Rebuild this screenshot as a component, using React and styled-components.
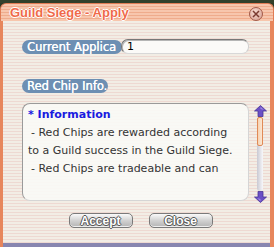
import React from "react";
import styled, { createGlobalStyle } from "styled-components";

const Global = createGlobalStyle`
  html, body { margin: 0; padding: 0; background: #2e3a26; overflow: hidden; }
  #root { width: 274px; height: 247px; }
`;

const stripes = `repeating-linear-gradient(to bottom, #f2ede5 0px, #f2ede5 2px, #eed9d2 2px, #eed9d2 3px)`;

const Window = styled.div`
  width: 274px;
  height: 247px;
  display: flex;
  flex-direction: column;
  font-family: "DejaVu Sans", Verdana, sans-serif;
`;

const TopGap = styled.div`
  height: 3px;
  background: #33402b;
`;

const TitleBar = styled.div`
  height: 17px;
  display: flex;
  align-items: center;
  justify-content: space-between;
  padding: 0 10px 0 9px;
  border-radius: 6px 6px 0 0;
  border: 1px solid #e07c55;
  border-bottom: none;
  background: repeating-linear-gradient(to bottom, #f7c6ad 0px, #f7c6ad 2px, #efab8c 2px, #efab8c 3px);
`;

const Title = styled.span`
  font-family: "Liberation Sans", Arial, sans-serif;
  font-weight: bold;
  font-size: 13px;
  color: #f06a4a;
  text-shadow: 1px 0 0 #fff, -1px 0 0 #fff, 0 1px 0 #fff, 0 -1px 0 #fff;
`;

const CloseX = styled.div`
  width: 12px;
  height: 12px;
  margin-top: 3px;
  border-radius: 50%;
  background: radial-gradient(circle at 40% 35%, #f8dcd2, #d39a8c);
  border: 1px solid #a25a4a;
  display: flex;
  align-items: center;
  justify-content: center;
`;

const Body = styled.div`
  flex: 1;
  display: flex;
  flex-direction: column;
  background: ${stripes};
  border-left: 3px solid #e7865c;
  border-right: 4px solid #e7865c;
  padding: 18px 21px 0 19px;
`;

const Row = styled.div`
  display: flex;
  align-items: center;
  margin-top: ${(p) => p.$mt || 0}px;
`;

const Pill = styled.div`
  height: 14px;
  width: ${(p) => p.$w}px;
  background: #6d8fb3;
  border-radius: 7px;
  color: #fff;
  font-size: 11.5px;
  line-height: 14px;
  padding-left: 5px;
  white-space: nowrap;
  overflow: hidden;
  box-sizing: border-box;
  flex-shrink: 0;
  text-shadow: 0.3px 0 0 #fff;
`;

const Input = styled.div`
  margin-left: -1px;
  flex: 1;
  height: 15px;
  box-sizing: border-box;
  background: #fbfaf8;
  border: 1px solid #777;
  border-right-color: #cfcfcf;
  border-bottom-color: #d8d8d8;
  border-radius: 7px;
  box-shadow: inset 1px 1px 0 #b5b5b5;
  font-size: 11px;
  line-height: 13px;
  padding-left: 5px;
  color: #000;
`;

const InfoRow = styled.div`
  display: flex;
  margin-top: 10px;
  margin-right: -18px;
`;

const TextBox = styled.div`
  width: 228px;
  height: 98px;
  box-sizing: border-box;
  background: rgba(250, 249, 246, 0.9);
  border: 1px solid #9a9a9a;
  border-right-color: #d5d5d5;
  border-bottom-color: #d5d5d5;
  border-radius: 8px;
  padding: 2px 4px 0 5px;
  overflow: hidden;
  font-size: 11px;
  line-height: 18px;
  color: #333;
`;

const Head = styled.div`
  color: #1a1ae0;
  font-weight: bold;
`;

const Line = styled.div`
  white-space: nowrap;
  padding-left: ${(p) => (p.$indent ? 3 : 0)}px;
`;

const Scroll = styled.div`
  width: 14px;
  margin-left: 4px;
  margin-top: 2px;
  display: flex;
  flex-direction: column;
  align-items: center;
`;

const Track = styled.div`
  width: 6px;
  height: 74px;
  background: linear-gradient(to right, #c9c9d2, #f7f7fa);
  border-radius: 3px;
  display: flex;
  flex-direction: column;
`;

const Thumb = styled.div`
  width: 6px;
  height: 29px;
  box-sizing: border-box;
  background: linear-gradient(to right, #f8d2b0, #fbe6d3);
  border: 1px solid #e08a55;
  border-radius: 2px;
`;

const Buttons = styled.div`
  display: flex;
  justify-content: center;
  gap: 16px;
  margin-top: 10px;
  padding-left: 10px;
`;

const Btn = styled.div`
  width: 64px;
  height: 15px;
  box-sizing: border-box;
  border-radius: 5px;
  border: 1px solid #7a7a7a;
  background: linear-gradient(to bottom, #fafafa, #d2d2d2 50%, #b4b4b4);
  box-shadow: inset 0 -1px 0 #eee;
  display: flex;
  align-items: center;
  justify-content: center;
  font-family: "Liberation Sans", Arial, sans-serif;
  font-weight: bold;
  font-size: 12px;
  color: #fff;
  text-shadow: 1px 0 0 #555, -1px 0 0 #555, 0 1px 0 #555, 0 -1px 0 #555;
`;

const BottomBar = styled.div`
  height: 4px;
  background: #8886b0;
  border-left: 3px solid #e7865c;
  border-right: 4px solid #e7865c;
`;

const Arrow = ({ down }) => (
  <svg width="13" height="12" viewBox="0 0 13 12" style={{ display: "block" }}>
    <g transform={down ? "rotate(180 6.5 6)" : undefined}>
      <path d="M6.5 0.5 L12.5 6 L9 6 L9 11.5 L4 11.5 L4 6 L0.5 6 Z" fill="#6b4fc6" stroke="#4a3596" strokeWidth="0.8" />
      <path d="M6.5 1.8 L10 5 L6.5 4 Z" fill="#9f8be6" />
    </g>
  </svg>
);

export default function App() {
  return (
    <>
      <Global />
      <Window>
        <TopGap />
        <TitleBar>
          <Title>Guild Siege - Apply</Title>
          <CloseX>
            <svg width="8" height="8" viewBox="0 0 8 8">
              <path d="M1 1 L7 7 M7 1 L1 7" stroke="#7a3a30" strokeWidth="1.5" />
            </svg>
          </CloseX>
        </TitleBar>
        <Body>
          <Row $mt={0}>
            <Pill $w={100}>Current Applica</Pill>
            <Input>1</Input>
          </Row>
          <Row $mt={25}>
            <Pill $w={86}>Red Chip Info.</Pill>
          </Row>
          <InfoRow>
            <TextBox>
              <Head>* Information</Head>
              <Line $indent> - Red Chips are rewarded according</Line>
              <Line>to a Guild success in the Guild Siege.</Line>
              <Line $indent> - Red Chips are tradeable and can</Line>
            </TextBox>
            <Scroll>
              <Arrow />
              <Track>
                <Thumb />
              </Track>
              <Arrow down />
            </Scroll>
          </InfoRow>
          <Buttons>
            <Btn>Accept</Btn>
            <Btn>Close</Btn>
          </Buttons>
        </Body>
        <BottomBar />
      </Window>
    </>
  );
}
